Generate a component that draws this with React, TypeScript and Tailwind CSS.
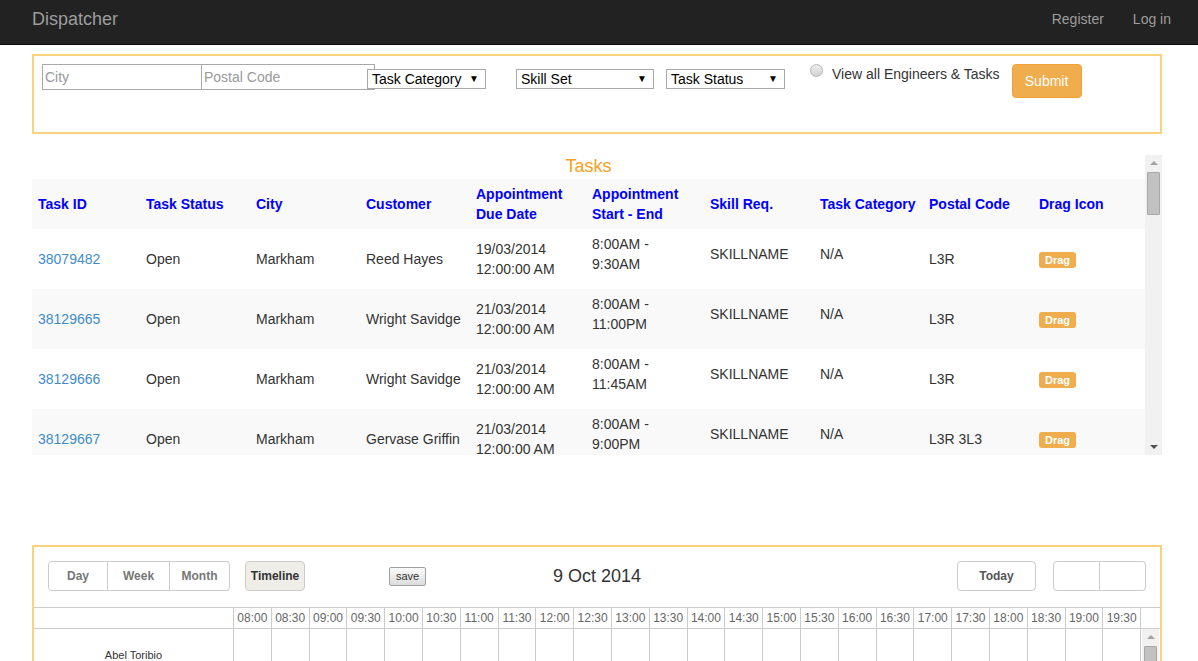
import React from 'react';

type Task = {
  id: string;
  city: string;
  customer: string;
  due: string;
  start: string;
  end: string;
  postal: string;
};

const tasks: Task[] = [
  { id: '38079482', city: 'Markham', customer: 'Reed Hayes', due: '19/03/2014', start: '8:00AM -', end: '9:30AM', postal: 'L3R' },
  { id: '38129665', city: 'Markham', customer: 'Wright Savidge', due: '21/03/2014', start: '8:00AM -', end: '11:00PM', postal: 'L3R' },
  { id: '38129666', city: 'Markham', customer: 'Wright Savidge', due: '21/03/2014', start: '8:00AM -', end: '11:45AM', postal: 'L3R' },
  { id: '38129667', city: 'Markham', customer: 'Gervase Griffin', due: '21/03/2014', start: '8:00AM -', end: '9:00PM', postal: 'L3R 3L3' },
];

const times = [
  '08:00', '08:30', '09:00', '09:30', '10:00', '10:30', '11:00', '11:30', '12:00', '12:30', '13:00', '13:30',
  '14:00', '14:30', '15:00', '15:30', '16:00', '16:30', '17:00', '17:30', '18:00', '18:30', '19:00', '19:30',
];

const Select: React.FC<{ label: string; className: string }> = ({ label, className }) => (
  <div className={`flex h-[20px] items-center justify-between border border-[#a9a9a9] bg-white pl-[4px] pr-[6px] text-[14px] leading-[18px] text-black ${className}`}>
    <span>{label}</span>
    <span className="text-[10px]">▼</span>
  </div>
);

const ScrollBar: React.FC<{ thumbTop: string; thumbHeight: string }> = ({ thumbTop, thumbHeight }) => (
  <div className="flex h-full w-[17px] flex-col items-center bg-[#f1f1f1]">
    <div className="mt-[6px] h-0 w-0 border-x-[4px] border-b-[4px] border-x-transparent border-b-[#a3a3a3]" />
    <div className={`w-[13px] rounded-[1px] border border-[#a8a8a8] bg-[#c1c1c1] ${thumbTop} ${thumbHeight}`} />
    <div className="flex-1" />
    <div className="mb-[6px] h-0 w-0 border-x-[4px] border-t-[4px] border-x-transparent border-t-[#505050]" />
  </div>
);

const colW = ['w-[108px]', 'w-[110px]', 'w-[110px]', 'w-[110px]', 'w-[116px]', 'w-[118px]', 'w-[110px]', 'w-[109px]', 'w-[110px]', 'w-[112px]'];

export default function App() {
  return (
    <div className="h-[661px] overflow-hidden bg-white font-['Liberation_Sans',Arial,sans-serif] text-[14px] text-[#333]">
      <nav className="flex h-[45px] items-start border-b border-[#080808] bg-[#222] px-[32px] pt-[9px]">
        <span className="text-[18px] leading-[20px] text-[#9d9d9d]">Dispatcher</span>
        <div className="ml-auto flex gap-[29px] text-[14px] leading-[20px] text-[#9d9d9d]">
          <span>Register</span>
          <span className="mr-[-5px]">Log in</span>
        </div>
      </nav>

      <div className="mx-[32px] mt-[9px] h-[80px] w-[1130px] border-2 border-[#fcd27d] px-[8px] pt-[8px]">
        <div className="flex items-start">
          <div className="flex h-[26px] w-[160px] items-center border border-[#a9a9a9] px-[2px] text-[14px] text-[#999]">City</div>
          <div className="flex h-[26px] w-[173px] items-center border border-l-0 border-[#a9a9a9] px-[2px] text-[14px] text-[#999]">Postal Code</div>
          <Select label="Task Category" className="-ml-[8px] mt-[5px] w-[119px]" />
          <Select label="Skill Set" className="ml-[30px] mt-[5px] w-[138px]" />
          <Select label="Task Status" className="ml-[12px] mt-[5px] w-[119px]" />
          <div className="ml-[25px] h-[13px] w-[13px] rounded-full border border-[#b5b5b5] bg-gradient-to-b from-[#ececec] to-[#d2d2d2]" />
          <span className="ml-[9px] mt-[1px] leading-[18px] text-[#333]">View all Engineers &amp; Tasks</span>
          <button className="ml-[12px] h-[34px] w-[70px] rounded-[4px] border border-[#eea236] bg-[#f0ad4e] text-[14px] text-white">Submit</button>
        </div>
      </div>

      <div className="mx-[32px] mt-[21px] flex h-[300px] w-[1130px]">
        <div className="flex-1 overflow-hidden">
          <div className="h-[24px] text-center text-[18px] leading-[22px] text-[#f9a11b]">Tasks</div>
          <div className="flex h-[50px] items-center bg-[#f9f9f9] text-[14px] font-bold leading-[20px] text-[#0000ff]">
            {['Task ID', 'Task Status', 'City', 'Customer', 'Appointment\nDue Date', 'Appointment\nStart - End', 'Skill Req.', 'Task Category', 'Postal Code', 'Drag Icon'].map((h, i) => (
              <div key={h} className={`${colW[i]} whitespace-pre-line pl-[6px]`}>{h}</div>
            ))}
          </div>
          {tasks.map((t, r) => (
            <div key={t.id} className={`flex h-[60px] items-center leading-[20px] ${r % 2 === 1 ? 'bg-[#f9f9f9]' : 'bg-white'}`}>
              <div className={`${colW[0]} pl-[6px] text-[#428bca]`}>{t.id}</div>
              <div className={`${colW[1]} pl-[6px]`}>Open</div>
              <div className={`${colW[2]} pl-[6px]`}>{t.city}</div>
              <div className={`${colW[3]} pl-[6px]`}>{t.customer}</div>
              <div className={`${colW[4]} pl-[6px]`}>{t.due}<br />12:00:00 AM</div>
              <div className={`${colW[5]} pb-[10px] pl-[6px]`}>{t.start}<br />{t.end}</div>
              <div className={`${colW[6]} pb-[10px] pl-[6px]`}>SKILLNAME</div>
              <div className={`${colW[7]} pb-[10px] pl-[6px]`}>N/A</div>
              <div className={`${colW[8]} pl-[6px]`}>{t.postal}</div>
              <div className={`${colW[9]} pl-[6px]`}>
                <span className="rounded-[3px] bg-[#f0ad4e] px-[6px] py-[2px] text-[11px] font-bold leading-[14px] text-white">Drag</span>
              </div>
            </div>
          ))}
        </div>
        <ScrollBar thumbTop="mt-[7px]" thumbHeight="h-[43px]" />
      </div>

      <div className="mx-[32px] mt-[90px] h-[300px] w-[1130px] border-2 border-[#fcd27d] pt-[14px]">
        <div className="flex h-[30px] items-center px-[14px]">
          <div className="flex h-[30px] text-[12px] font-bold text-[#777]">
            <div className="flex w-[60px] items-center justify-center rounded-l-[4px] border border-[#ccc]">Day</div>
            <div className="flex w-[62px] items-center justify-center border border-l-0 border-[#ccc]">Week</div>
            <div className="flex w-[60px] items-center justify-center rounded-r-[4px] border border-l-0 border-[#ccc]">Month</div>
          </div>
          <div className="ml-[15px] flex h-[30px] w-[60px] items-center justify-center rounded-[4px] border border-[#ccc] bg-[#efede8] text-[12px] font-bold text-[#333]">Timeline</div>
          <div className="ml-[84px] flex h-[19px] w-[37px] items-center justify-center rounded-[2px] border border-[#a0a0a0] bg-gradient-to-b from-[#fafafa] to-[#dcdcdc] text-[11px] text-[#333]">save</div>
          <div className="ml-[127px] text-[18px] leading-[22px] text-[#333]">9 Oct 2014</div>
          <div className="ml-auto flex h-[30px] w-[79px] items-center justify-center rounded-[4px] border border-[#ccc] text-[12px] font-bold text-[#555]">Today</div>
          <div className="ml-[17px] flex h-[30px]">
            <div className="w-[47px] rounded-l-[4px] border border-[#ccc]" />
            <div className="w-[46px] rounded-r-[4px] border border-l-0 border-[#ccc]" />
          </div>
        </div>

        <div className="mt-[16px] flex h-[22px] border-y border-[#ccc] text-[12px] leading-[20px] text-[#666]">
          <div className="w-[199px]" />
          {times.map((tm) => (
            <div key={tm} className="w-[37.8px] border-l border-[#ccc] text-center">{tm}</div>
          ))}
          <div className="w-[20px] border-l border-[#ccc]" />
        </div>

        <div className="flex h-[60px]">
          <div className="flex w-[199px] items-start justify-center pt-[19px] text-[11px] leading-[14px] text-[#333]">Abel Toribio</div>
          {times.map((tm) => (
            <div key={tm} className="w-[37.8px] border-l border-[#ccc]" />
          ))}
          <div className="w-[2px] border-l border-[#ccc]" />
          <ScrollBar thumbTop="mt-[7px]" thumbHeight="h-[43px]" />
        </div>
      </div>
    </div>
  );
}
